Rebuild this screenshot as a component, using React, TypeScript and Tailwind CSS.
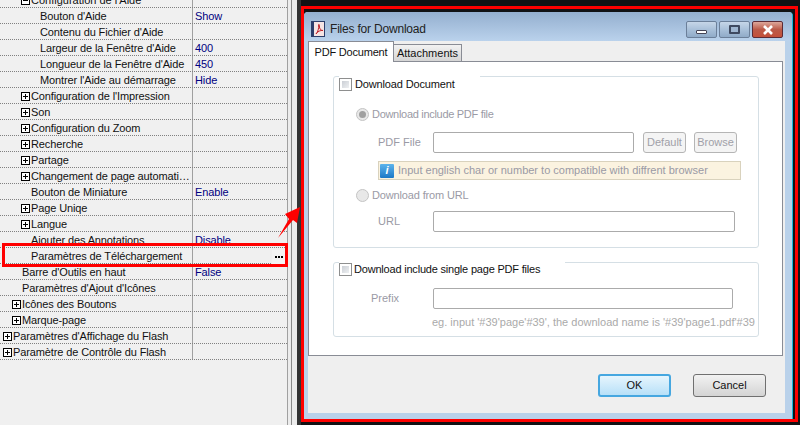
import React from "react";

const font = { fontFamily: '"Liberation Sans", Arial, sans-serif' };

function Plus() {
  return (
    <span className="relative w-[9px] h-[9px] border border-black bg-white shrink-0 mr-[1px] block">
      <span className="absolute left-[1px] right-[1px] top-[3px] h-[1px] bg-black" />
      <span className="absolute top-[1px] bottom-[1px] left-[3px] w-[1px] bg-black" />
    </span>
  );
}

type R = { t: string; v?: string; i: number; plus?: boolean; btn?: boolean };
const rows: R[] = [
  { t: "Bouton d'Aide", v: "Show", i: 40 },
  { t: "Contenu du Fichier d'Aide", i: 40 },
  { t: "Largeur de la Fenêtre d'Aide", v: "400", i: 40 },
  { t: "Longueur de la Fenêtre d'Aide", v: "450", i: 40 },
  { t: "Montrer l'Aide au démarrage", v: "Hide", i: 40 },
  { t: "Configuration de l'Impression", i: 21, plus: true },
  { t: "Son", i: 21, plus: true },
  { t: "Configuration du Zoom", i: 21, plus: true },
  { t: "Recherche", i: 21, plus: true },
  { t: "Partage", i: 21, plus: true },
  { t: "Changement de page automati…", i: 21, plus: true },
  { t: "Bouton de Miniature", v: "Enable", i: 31 },
  { t: "Page Uniqe", i: 21, plus: true },
  { t: "Langue", i: 21, plus: true },
  { t: "Ajouter des Annotations", v: "Disable", i: 31 },
  { t: "Paramètres de Téléchargement", i: 31, btn: true },
  { t: "Barre d'Outils en haut", v: "False", i: 22 },
  { t: "Paramètres d'Ajout d'Icônes", i: 22 },
  { t: "Icônes des Boutons", i: 12, plus: true },
  { t: "Marque-page", i: 12, plus: true },
  { t: "Paramètres d'Affichage du Flash", i: 3, plus: true },
  { t: "Paramètre de Contrôle du Flash", i: 3, plus: true },
];

function Row({ r }: { r: R }) {
  return (
    <div className="h-[16px] flex border-b border-dotted border-[#808080] text-[11px] leading-[15px] text-[#111] tracking-[-0.12px]">
      <div
        className="w-[193px] flex items-center whitespace-nowrap border-r border-solid border-[#a0a0a0] shrink-0 pt-[2px]"
        style={{ paddingLeft: r.i }}
      >
        {r.plus && <Plus />}
        <span>{r.t}</span>
      </div>
      <div className="flex-1 pl-[2px] pt-[2px] text-[#000080] flex items-center justify-between">
        <span>{r.v}</span>
        {r.btn && (
          <span className="w-[14px] h-[15px] mr-[1px] -mb-[1px] bg-[#f4f4f4] border-b border-black flex items-center justify-center gap-[1px]">
            <span className="w-[2px] h-[2px] bg-black" />
            <span className="w-[2px] h-[2px] bg-black" />
            <span className="w-[2px] h-[2px] bg-black" />
          </span>
        )}
      </div>
    </div>
  );
}

function Check() {
  return (
    <span className="w-[13px] h-[13px] border border-[#8e8f8f] bg-white p-[2px] block shrink-0">
      <span className="block w-full h-full bg-gradient-to-br from-[#cbcfd5] to-[#eef0f2]" />
    </span>
  );
}

function Radio({ on }: { on?: boolean }) {
  return (
    <span className="w-[13px] h-[13px] rounded-full border border-[#c4c4c4] bg-[#e8e8e8] flex items-center justify-center shrink-0">
      {on && <span className="w-[7px] h-[7px] rounded-full bg-[#a0a0a0]" />}
    </span>
  );
}

function Input({ w }: { w: string }) {
  return <span className={`${w} h-[21px] border border-[#ababab] rounded-[2px] bg-white block shrink-0`} />;
}

function Small({ children }: { children: React.ReactNode }) {
  return (
    <span className="w-[43px] h-[21px] border border-[#b5b5b5] rounded-[3px] bg-[#f4f4f4] text-[#a0a0a8] flex items-center justify-center shrink-0">
      {children}
    </span>
  );
}

function WinBtn({ children, red }: { children: React.ReactNode; red?: boolean }) {
  return (
    <span
      className={`w-[31px] h-[17px] rounded-[2px] border flex items-center justify-center ${
        red
          ? "border-[#5c2b35] bg-gradient-to-b from-[#dca79b] via-[#bb5a48] to-[#c4503a]"
          : "border-[#6b7f99] bg-gradient-to-b from-[#c6d6e8] via-[#a9c0d9] to-[#90abc8]"
      }`}
    >
      {children}
    </span>
  );
}

export default function App() {
  return (
    <div className="w-[800px] h-[425px] relative overflow-hidden bg-[#111214] flex" style={font}>
      {/* left property grid */}
      <div className="w-[288px] h-[425px] bg-[#f0f0f0] shrink-0 overflow-hidden border-r border-[#a0a0a0]">
        <div className="-mt-[8px]">
          <div className="h-[16px] flex border-b border-dotted border-[#808080] text-[11px] leading-[15px] text-[#111]">
            <div className="w-[193px] pl-[21px] pt-[2px] flex items-center whitespace-nowrap border-r border-[#a0a0a0] shrink-0">
              <span className="relative w-[9px] h-[9px] border border-black bg-white shrink-0 mr-[1px] block">
                <span className="absolute left-[1px] right-[1px] top-[3px] h-[1px] bg-black" />
              </span>
              Configuration de l'Aide
            </div>
          </div>
          {rows.map((r) => (
            <Row key={r.t} r={r} />
          ))}
        </div>
      </div>
      {/* gutter */}
      <div className="w-[3px] h-full bg-[#ececec] shrink-0" />
      <div className="w-[1px] h-full bg-[#8a8a8a] shrink-0" />
      <div className="w-[5px] h-full bg-[#ececec] shrink-0" />
      <div className="w-[4px] h-full bg-[#333] shrink-0" />

      {/* dialog frame */}
      <div className="mt-[6px] w-[497px] h-[416px] border-[3px] border-[#ff0000] shrink-0 pt-[3px] pr-[2px] bg-[#111214]">
        <div className="h-full border-r border-[#19b5d8] rounded-t-[4px] bg-[#b9d1ea] flex flex-col">
          <div className="h-[29px] flex items-start bg-gradient-to-b from-[#94afcf] to-[#bad2ec] pl-[7px] pr-[9px] shrink-0 rounded-t-[4px]">
            <svg width="14" height="16" viewBox="0 0 14 16" className="shrink-0 mt-[9px]">
              <rect width="14" height="16" fill="#2c3e6b" />
              <rect x="3" y="1" width="10" height="14" fill="#f6e4e4" />
              <path d="M5 13c2-2 3-6 2.6-9C7.4 3 8.6 3 8.4 5 8.2 8 10 9.5 12 9.5 9.5 9 6.5 10.5 5 13z" fill="none" stroke="#c0242b" strokeWidth="1" />
            </svg>
            <span className="ml-[5px] mt-[10px] text-[12px] tracking-[-0.2px] text-[#222] leading-[15px] whitespace-nowrap">Files for Download</span>
            <span className="flex-1" />
            <div className="flex gap-[2px] mt-[9px]">
              <WinBtn>
                <span className="w-[11px] h-[4px] bg-white border border-[#445] rounded-[1px] mt-[4px]" />
              </WinBtn>
              <WinBtn>
                <span className="w-[11px] h-[9px] bg-[#9fb6d0] border-2 border-[#3f4a60] rounded-[1px]" />
              </WinBtn>
              <WinBtn red>
                <svg width="12" height="10" viewBox="0 0 12 10">
                  <path d="M2 1l8 8M10 1L2 9" stroke="#fff" strokeWidth="2.6" />
                </svg>
              </WinBtn>
            </div>
          </div>
          <div className="flex-1 ml-[4px] mr-[7px] mb-[6px] bg-[#efefef] flex flex-col min-h-0">
            <div className="h-[21px] flex items-end shrink-0 text-[11px] text-[#111] relative z-10 -mb-[1px]">
              <div className="w-[86px] h-[21px] bg-white border border-b-0 border-[#898c95] flex items-center justify-center whitespace-nowrap tracking-[-0.2px]">PDF Document</div>
              <div className="w-[68px] h-[18px] bg-gradient-to-b from-[#f2f2f2] to-[#d5d5d5] border border-[#898c95] border-l-0 flex items-center justify-center whitespace-nowrap">Attachments</div>
            </div>
            <div className="h-[295px] bg-white border border-[#898c95] mr-[2px] shrink-0 pl-[24px] pt-[14px] text-[11px] text-[#9a9aa5]">
              {/* group 1 */}
              <div className="w-[426px] h-[172px] border border-[#d5dfe5] rounded-[3px] relative pl-[22px] pt-[29px]">
                <div className="absolute -top-[1px] left-[5px] w-[141px] h-[16px] bg-white flex items-center text-[#111] gap-[2px]">
                  <Check />
                  <span className="ml-[1px] whitespace-nowrap tracking-[-0.15px]">Download Document</span>
                </div>
                <div className="flex items-center gap-[3px] h-[16px]">
                  <Radio on />
                  <span className="tracking-[-0.3px]">Download include PDF file</span>
                </div>
                <div className="flex items-center mt-[10px] pl-[22px]">
                  <span className="w-[55px]">PDF File</span>
                  <Input w="w-[201px]" />
                  <span className="w-[9px]" />
                  <Small>Default</Small>
                  <span className="w-[8px]" />
                  <Small>Browse</Small>
                </div>
                <div className="ml-[22px] mt-[8px] w-[363px] h-[19px] bg-[#fbf3e0] border border-[#d9d2bd] flex items-center">
                  <span className="w-[14px] h-[14px] ml-[1px] bg-gradient-to-b from-[#5cb4ec] to-[#1a78c6] rounded-[1px] text-white text-[11px] font-bold italic leading-none flex items-center justify-center shrink-0">
                    i
                  </span>
                  <span className="ml-[4px] whitespace-nowrap">Input english char or number to compatible with diffrent browser</span>
                </div>
                <div className="flex items-center gap-[3px] mt-[7px] h-[16px]">
                  <Radio />
                  <span className="tracking-[-0.15px]">Download from URL</span>
                </div>
                <div className="flex items-center mt-[8px] pl-[22px]">
                  <span className="w-[55px]">URL</span>
                  <Input w="w-[302px]" />
                </div>
              </div>
              {/* group 2 */}
              <div className="w-[426px] h-[75px] mt-[14px] border border-[#d5dfe5] rounded-[3px] relative pl-[37px] pt-[25px]">
                <div className="absolute -top-[1px] left-[5px] w-[226px] h-[14px] bg-white flex items-center text-[#111] gap-[2px]">
                  <Check />
                  <span className="whitespace-nowrap tracking-[-0.2px]">Download include single page PDF files</span>
                </div>
                <div className="flex items-center">
                  <span className="w-[62px]">Prefix</span>
                  <Input w="w-[300px]" />
                </div>
                <div className="ml-[61px] mt-[5px] whitespace-nowrap w-[327px] text-[11px] leading-[16px] text-[#aaa]">
                  eg. input '#39'page'#39', the download name is '#39'page1.pdf'#39
                </div>
              </div>
            </div>
            <div className="flex-1 flex justify-end items-start pt-[18px] pr-[19px] gap-[22px] text-[11px] text-[#111]">
              <span className="w-[73px] h-[23px] rounded-[3px] border-2 border-[#46a7e0] bg-gradient-to-b from-[#e6f5fd] to-[#b7e0f8] flex items-center justify-center">OK</span>
              <span className="w-[73px] h-[23px] rounded-[3px] border border-[#707070] bg-gradient-to-b from-[#f2f2f2] to-[#d4d4d4] flex items-center justify-center">Cancel</span>
            </div>
          </div>
        </div>
      </div>

      {/* highlight box over the row */}
      <div className="absolute left-[2px] top-[243px] w-[286px] h-[24px] border-[3px] border-[#ff0000]" />
      {/* arrow */}
      <svg className="absolute left-[270px] top-[200px]" width="40" height="46" viewBox="0 0 40 46">
        <path d="M8 38 L19 19 L15 14 L30 7 L27 23 L23 20 Z" fill="#ff0000" />
      </svg>
    </div>
  );
}
